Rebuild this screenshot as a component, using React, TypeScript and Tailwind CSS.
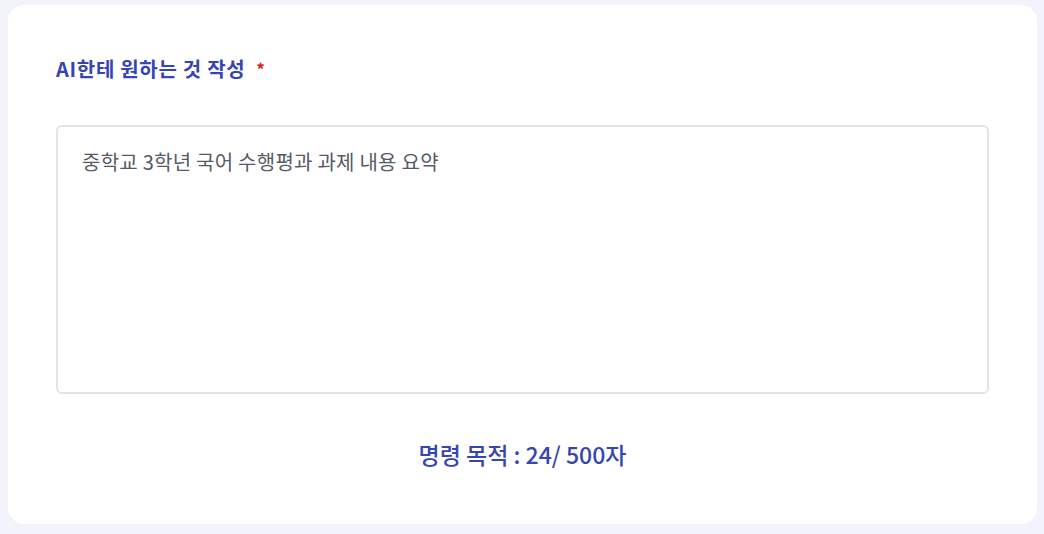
import React from "react";

export default function App() {
  const font = { fontFamily: '"Noto Sans CJK KR", "Noto Sans", sans-serif' };
  return (
    <div className="h-[534px] w-full bg-[#f3f3fb] pl-2 pr-[7px] pt-[5px] pb-[10px]" style={font}>
      <div className="h-full rounded-[16px] bg-white px-12 pt-[50px]">
        <div className="flex items-center gap-[11px] text-[20px] font-bold leading-[28px] tracking-[0.7px] text-[#3645b5]">
          <span>AI한테 원하는 것 작성</span>
          <span className="text-[17px] text-[#e0201b]">*</span>
        </div>
        <textarea
          readOnly
          className="mt-[42px] block h-[269px] w-full resize-none rounded-[6px] border-2 border-[#e3e3ea] bg-white px-6 pt-[20px] text-[20px] leading-[30px] tracking-[0.25px] text-[#565a66] outline-none"
          style={font}
          defaultValue="중학교 3학년 국어 수행평과 과제 내용 요약"
        />
        <div className="mt-[45px] text-center text-[23px] font-medium leading-[30px] text-[#3645b5]">
          명령 목적 : 24/ 500자
        </div>
      </div>
    </div>
  );
}
